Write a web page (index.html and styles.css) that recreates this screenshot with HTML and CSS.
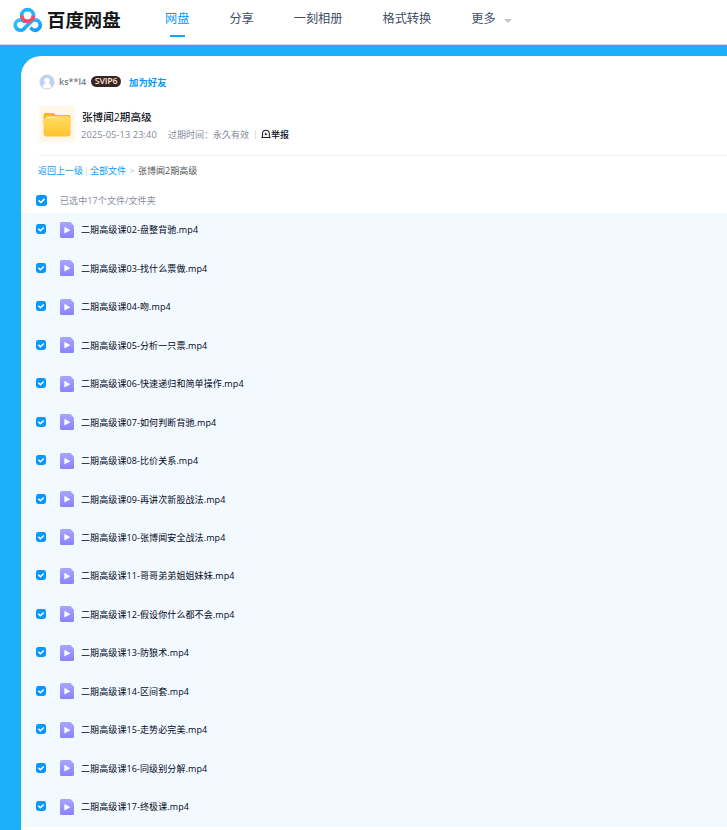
FILE: index.html
```html
<!DOCTYPE html>
<html lang="zh-CN">
<head>
<meta charset="utf-8">
<title>百度网盘</title>
<link rel="stylesheet" href="styles.css">
</head>
<body>
<svg width="0" height="0" class="defs" aria-hidden="true">
  <defs>
    <linearGradient id="videoFill" x1="0" y1="0" x2="0" y2="1"><stop offset="0" stop-color="#aaa5ff"/><stop offset="1" stop-color="#8882ff"/></linearGradient>
    <linearGradient id="folderFill" x1="0" y1="0" x2="0" y2="1"><stop offset="0" stop-color="#ffdc62"/><stop offset="1" stop-color="#ffc32e"/></linearGradient>
    <linearGradient id="logoBlue" x1="0" y1="0" x2="1" y2="1"><stop offset="0" stop-color="#31c9ff"/><stop offset="1" stop-color="#1698ff"/></linearGradient>
    <symbol id="check" viewBox="0 0 10 10"><rect width="10" height="10" rx="2.4" fill="#0697ff"/><path d="M2.3 4.8 4.4 6.8 7.8 3.5" fill="none" stroke="#fff" stroke-width="1.5"/></symbol>
    <symbol id="video" viewBox="0 0 14 16"><path d="M1.5 0H10.5L14 3.8V14.5Q14 16 12.5 16H1.5Q0 16 0 14.5V1.5Q0 0 1.5 0Z" fill="url(#videoFill)"/><path d="M4.6 5.2V11.1L9.9 8.15Z" fill="#fff" stroke="#fff" stroke-width=".5" stroke-linejoin="round"/></symbol>
  </defs>
</svg>
<header class="header">
  <div class="brand">
    <svg class="logo" viewBox="0 0 30 26" fill="none" stroke-width="3.7">
      <path d="M11.2 14.5A5.2 5.2 0 1 0 11 21.8L14.5 18.1L18 14.8A5.2 5.2 0 1 1 18.4 21.8" stroke="url(#logoBlue)" stroke-linecap="round"/>
      <circle cx="14.6" cy="8.5" r="5.9" stroke="#20b7ff"/>
      <path d="M8.7 8.5A5.9 5.9 0 0 0 20.5 8.5" stroke="#ff4666"/>
    </svg>
    <span class="brand-name">百度网盘</span>
  </div>
  <nav class="nav">
    <a class="active">网盘</a><a>分享</a><a>一刻相册</a><a>格式转换</a><a class="more">更多<i class="caret"></i></a>
  </nav>
</header>
<main class="panel">
  <div class="user">
    <svg class="avatar" viewBox="0 0 16 16"><circle cx="8" cy="8" r="7.3" fill="#bcd0fa" stroke="#ead9c5" stroke-width=".8"/><circle cx="8" cy="6.5" r="2.8" fill="#fff"/><path d="M3.8 13.2Q4.2 8.9 8 8.9T12.2 13.2Q8 15.7 3.8 13.2Z" fill="#fff"/></svg>
    <span class="user-name">ks**l4</span>
    <span class="badge">SVIP6</span>
    <a class="add">加为好友</a>
  </div>
  <section class="share">
    <div class="folder-box">
      <svg class="folder" viewBox="0 0 28 25"><path d="M.5 3Q.5 1 2.5 1H9.8Q11 1 11.7 1.8L12.7 3H25.2Q27.5 3 27.5 5.3V12H.5Z" fill="#fbb51d"/><rect x="3" y="4.5" width="22" height="5" fill="#fff1bf"/><path d="M.5 7.4Q.5 5.9 2 5.9H11.2Q12 5.9 13 5.4T15 4.9H25.5Q27.5 4.9 27.5 6.9V22Q27.5 24.4 25.1 24.4H2.9Q.5 24.4.5 22Z" fill="url(#folderFill)"/></svg>
    </div>
    <div class="share-info">
      <h1>张博闻2期高级</h1>
      <div class="meta">
        <span class="date">2025-05-13 23:40</span>
        <span class="expiry">过期时间：永久有效</span>
        <i class="divider"></i>
        <a class="report"><svg class="alarm" viewBox="0 0 10 10" fill="none" stroke="#20242f"><path d="M1.5 8.2V4.5Q1.5 1.2 4.9 1.2T8.3 4.5V8.2M.3 8.5H9.7" stroke-width="1.1"/><path d="M3.9 3.4V6.6L6.5 5.3Z" fill="#20242f" stroke="none"/></svg>举报</a>
      </div>
    </div>
  </section>
  <div class="crumbs"><a>返回上一级</a><i class="bar">|</i><a>全部文件</a><i class="gt">&gt;</i><span>张博闻2期高级</span></div>
  <div class="selection"><svg class="check-all"><use href="#check"/></svg><span>已选中17个文件/文件夹</span></div>
  <ul class="files">
    <li><svg class="check"><use href="#check"/></svg><svg class="video"><use href="#video"/></svg><span>二期高级课02-盘整背驰.mp4</span></li>
    <li><svg class="check"><use href="#check"/></svg><svg class="video"><use href="#video"/></svg><span>二期高级课03-找什么票做.mp4</span></li>
    <li><svg class="check"><use href="#check"/></svg><svg class="video"><use href="#video"/></svg><span>二期高级课04-吻.mp4</span></li>
    <li><svg class="check"><use href="#check"/></svg><svg class="video"><use href="#video"/></svg><span>二期高级课05-分析一只票.mp4</span></li>
    <li><svg class="check"><use href="#check"/></svg><svg class="video"><use href="#video"/></svg><span>二期高级课06-快速递归和简单操作.mp4</span></li>
    <li><svg class="check"><use href="#check"/></svg><svg class="video"><use href="#video"/></svg><span>二期高级课07-如何判断背驰.mp4</span></li>
    <li><svg class="check"><use href="#check"/></svg><svg class="video"><use href="#video"/></svg><span>二期高级课08-比价关系.mp4</span></li>
    <li><svg class="check"><use href="#check"/></svg><svg class="video"><use href="#video"/></svg><span>二期高级课09-再讲次新股战法.mp4</span></li>
    <li><svg class="check"><use href="#check"/></svg><svg class="video"><use href="#video"/></svg><span>二期高级课10-张博闻安全战法.mp4</span></li>
    <li><svg class="check"><use href="#check"/></svg><svg class="video"><use href="#video"/></svg><span>二期高级课11-哥哥弟弟姐姐妹妹.mp4</span></li>
    <li><svg class="check"><use href="#check"/></svg><svg class="video"><use href="#video"/></svg><span>二期高级课12-假设你什么都不会.mp4</span></li>
    <li><svg class="check"><use href="#check"/></svg><svg class="video"><use href="#video"/></svg><span>二期高级课13-防狼术.mp4</span></li>
    <li><svg class="check"><use href="#check"/></svg><svg class="video"><use href="#video"/></svg><span>二期高级课14-区间套.mp4</span></li>
    <li><svg class="check"><use href="#check"/></svg><svg class="video"><use href="#video"/></svg><span>二期高级课15-走势必完美.mp4</span></li>
    <li><svg class="check"><use href="#check"/></svg><svg class="video"><use href="#video"/></svg><span>二期高级课16-同级别分解.mp4</span></li>
    <li><svg class="check"><use href="#check"/></svg><svg class="video"><use href="#video"/></svg><span>二期高级课17-终极课.mp4</span></li>
  </ul>
</main>
</body>
</html>
```
FILE: styles.css
```css
* { box-sizing: border-box; }
body {
  margin: 0;
  height: 830px;
  overflow: hidden;
  background: #1bb0f7;
  font-family: "Open Sans", "Noto Sans CJK SC", sans-serif;
  font-size: 9px;
  color: #03081a;
  white-space: nowrap;
}
svg { display: block; flex: none; }
i { font-style: normal; }
.defs { position: absolute; }

.header {
  display: flex;
  height: 45px;
  background: #fff;
  border-bottom: 1px solid #d3dce6;
}
.brand { display: flex; width: 165px; padding: 7px 0 0 13px; }
.logo { width: 30px; height: 26px; }
.brand-name {
  margin-left: 4px;
  font-size: 18.4px;
  font-weight: 700;
  line-height: 25px;
  color: #15171b;
}
.nav { display: flex; gap: 40px; font-size: 12.2px; line-height: 38px; color: #424e67; }
.nav a { height: 38px; }
.nav .active { color: #0698ff; display: flex; flex-direction: column; align-items: center; }
.nav .active::after { content: ""; flex: none; width: 15px; height: 2px; margin-top: -3px; background: #14aaf5; }
.more { display: flex; align-items: center; }
.caret { margin: 3px 0 0 8px; border: 4px solid transparent; border-top-color: #c8c8c8; border-bottom: 0; }

.panel {
  height: 785px;
  margin: 11px 0 0 21px;
  background: #fff;
  border-top-left-radius: 20px;
}
.user { display: flex; align-items: center; height: 51px; padding-left: 18px; }
.avatar { width: 16px; height: 16px; }
.user-name { width: 32px; margin-left: 4px; font-size: 9px; font-weight: 600; color: #747b89; }
.badge {
  width: 30px;
  height: 11px;
  border-radius: 6px;
  background: #362525;
  color: #ffe1cc;
  font: 600 8.8px/11px "Open Sans", sans-serif;
  letter-spacing: -.2px;
  text-align: center;
}
.add { margin-left: 8px; font-weight: 700; font-size: 9.4px; color: #0698ff; }

.share { display: flex; height: 49px; margin-left: 18px; border-bottom: 1px solid #f1f2f5; }
.folder-box {
  display: flex;
  align-items: center;
  justify-content: center;
  width: 36px;
  height: 36px;
  margin-top: -1px;
  background: #fff8e9;
  border-radius: 3px;
}
.folder { width: 28px; height: 25px; }
.share-info { padding: 1px 0 0 7px; }
h1 { margin: 0; font-size: 10.6px; font-weight: 500; line-height: 18px; color: #15171f; }
.meta { display: flex; align-items: center; height: 16px; margin-left: -1px; color: #818999; }
.date { width: 87px; font-size: 9.3px; letter-spacing: .08px; }
.expiry { width: 83px; }
.divider { width: 1px; height: 9px; margin-left: 4px; background: #dfe1e6; }
.report { display: flex; align-items: center; margin-left: 5px; font-weight: 500; color: #03081a; }
.alarm { width: 10px; height: 10px; }

.crumbs { display: flex; height: 30px; padding-left: 17px; line-height: 30px; color: #555; }
.crumbs a { color: #0b9bf8; }
.bar { width: 7px; text-align: center; color: #b9d8ee; }
.gt { width: 12px; text-align: center; color: #a9c7dd; }
.selection { display: flex; align-items: center; height: 27px; padding: 2px 0 0 15px; color: #878c9c; }
.selection span { letter-spacing: .1px; }
.check-all { width: 11px; height: 11px; margin-right: 13px; }
.files {
  height: 614px;
  margin: 0;
  padding: 0;
  overflow: hidden;
  list-style: none;
  background: #f2f9ff;
}
.files li { display: flex; align-items: center; height: 38.47px; padding: 0 0 5px 15px; }
.check { width: 10px; height: 10px; margin: 0 14px 1px 0; }
.video { width: 14px; height: 16px; margin-right: 7px; }
.files span { letter-spacing: .1px; }
```
